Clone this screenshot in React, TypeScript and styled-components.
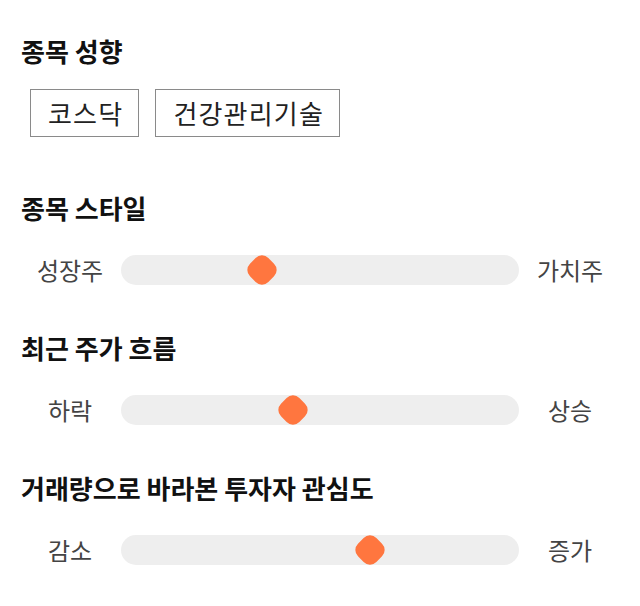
import styled, { createGlobalStyle } from "styled-components";

interface ISlider {
  title: string;
  left: string;
  right: string;
  value: number;
}

const sliders: ISlider[] = [
  { title: "종목 스타일", left: "성장주", right: "가치주", value: 0.355 },
  { title: "최근 주가 흐름", left: "하락", right: "상승", value: 0.433 },
  { title: "거래량으로 바라본 투자자 관심도", left: "감소", right: "증가", value: 0.625 },
];

const chips = ["코스닥", "건강관리기술"];

const GlobalStyle = createGlobalStyle`
  body {
    margin: 0;
    background: #ffffff;
    font-family: "Noto Sans CJK KR", "Noto Sans", sans-serif;
  }
`;

const Page = styled.div`
  width: 640px;
  padding: 35px 20px 0;
  box-sizing: border-box;
`;

const Section = styled.section<{ $top: number }>`
  margin-top: ${(props) => props.$top}px;
`;

const Heading = styled.h2`
  margin: 0;
  padding-left: 1px;
  font-size: 26px;
  line-height: 32px;
  font-weight: 700;
  color: #111111;
`;

const ChipRow = styled.div`
  display: flex;
  gap: 16px;
  margin-top: 22px;
  padding-left: 10px;
`;

const Chip = styled.div`
  height: 48px;
  box-sizing: border-box;
  padding: 0 15px 0 17px;
  border: 1px solid #8a8a8a;
  display: flex;
  align-items: center;
  font-size: 26px;
  line-height: 30px;
  letter-spacing: 1.2px;
  color: #222222;
`;

const SliderRow = styled.div`
  display: flex;
  align-items: center;
  height: 30px;
  margin-top: 31px;
`;

const Label = styled.span`
  width: 100px;
  text-align: center;
  font-size: 24px;
  line-height: 30px;
  color: #444444;
  flex-shrink: 0;
`;

const Track = styled.div`
  position: relative;
  flex: 1;
  height: 30px;
  margin: 0 1px;
  border-radius: 15px;
  background: #eeeeee;
`;

const Thumb = styled.div`
  position: absolute;
  top: 50%;
  width: 26px;
  height: 26px;
  margin: -13px 0 0 -13px;
  border-radius: 9px;
  background: #ff763f;
  transform: rotate(45deg);
`;

const App = () => {
  return (
    <Page>
      <GlobalStyle />
      <Section $top={0}>
        <Heading>종목 성향</Heading>
        <ChipRow>
          {chips.map((chip) => (
            <Chip key={chip}>{chip}</Chip>
          ))}
        </ChipRow>
      </Section>
      {sliders.map((slider, index) => (
        <Section key={slider.title} $top={index === 0 ? 55 : 47}>
          <Heading>{slider.title}</Heading>
          <SliderRow>
            <Label>{slider.left}</Label>
            <Track>
              <Thumb style={{ left: `${slider.value * 100}%` }} />
            </Track>
            <Label>{slider.right}</Label>
          </SliderRow>
        </Section>
      ))}
    </Page>
  );
};

export default App;
